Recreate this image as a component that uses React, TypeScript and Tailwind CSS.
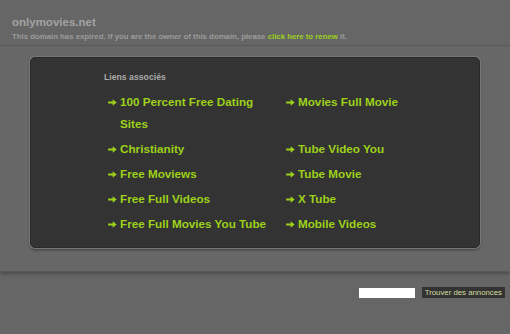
const links = [
  '100 Percent Free Dating Sites',
  'Movies Full Movie',
  'Christianity',
  'Tube Video You',
  'Free Moviews',
  'Tube Movie',
  'Free Full Videos',
  'X Tube',
  'Free Full Movies You Tube',
  'Mobile Videos',
]

function Arrow() {
  return (
    <svg viewBox="0 0 10 8" className="mt-[8px] mr-[3px] h-[7px] w-[9px] shrink-0 fill-current">
      <path d="M0 2.9h5.2V0.4L9.8 4 5.2 7.6V5.1H0z" />
    </svg>
  )
}

export default function App() {
  return (
    <div className="flex h-[334px] w-[510px] flex-col overflow-hidden bg-[#666] font-['Liberation_Sans',Arial,sans-serif]">
      <header className="h-[46px] border-b border-[#5c5c5c] px-[12px] pt-[15px]">
        <h1 className="text-[11.5px] leading-[14px] font-bold text-[#a3a3a3]">onlymovies.net</h1>
        <p className="mt-[3px] text-[7.8px] leading-[10px] font-bold text-[#9c9c9c]">
          This domain has expired. If you are the owner of this domain, please{' '}
          <a href="#" className="text-[#9dd11a]">click here to renew</a> it.
        </p>
      </header>

      <main className="h-[226px] border-b border-[#5a5a5a] bg-[#676767] px-[30px] pt-[11px] shadow-[0_2px_3px_rgba(0,0,0,0.25)]">
        <section className="h-[191px] rounded-[5px] border border-[#2a2a2a] bg-[#333] pt-[13px] pl-[73px] shadow-[0_0_0_1px_#777,0_2px_3px_rgba(0,0,0,0.4)]">
          <h2 className="text-[8.7px] leading-[12px] font-bold text-[#aaa]">Liens associés</h2>
          <ul className="mt-[8px] grid w-[360px] grid-cols-2 pl-[4px]">
            {links.map((l) => (
              <li key={l} className="flex pb-[3px] text-[11.7px] leading-[22px] font-bold text-[#9dd11a]">
                <Arrow />
                <a href="#" className="pr-[8px]">{l}</a>
              </li>
            ))}
          </ul>
        </section>
      </main>

      <div className="flex items-center justify-end gap-[7px] pt-[15px] pr-[5px]">
        <input type="text" className="h-[10px] w-[56px] bg-white outline-none" />
        <button className="h-[11px] bg-[#333] px-[3px] text-[7.8px] leading-[11px] text-[#d2dca0]">
          Trouver des annonces
        </button>
      </div>
    </div>
  )
}
